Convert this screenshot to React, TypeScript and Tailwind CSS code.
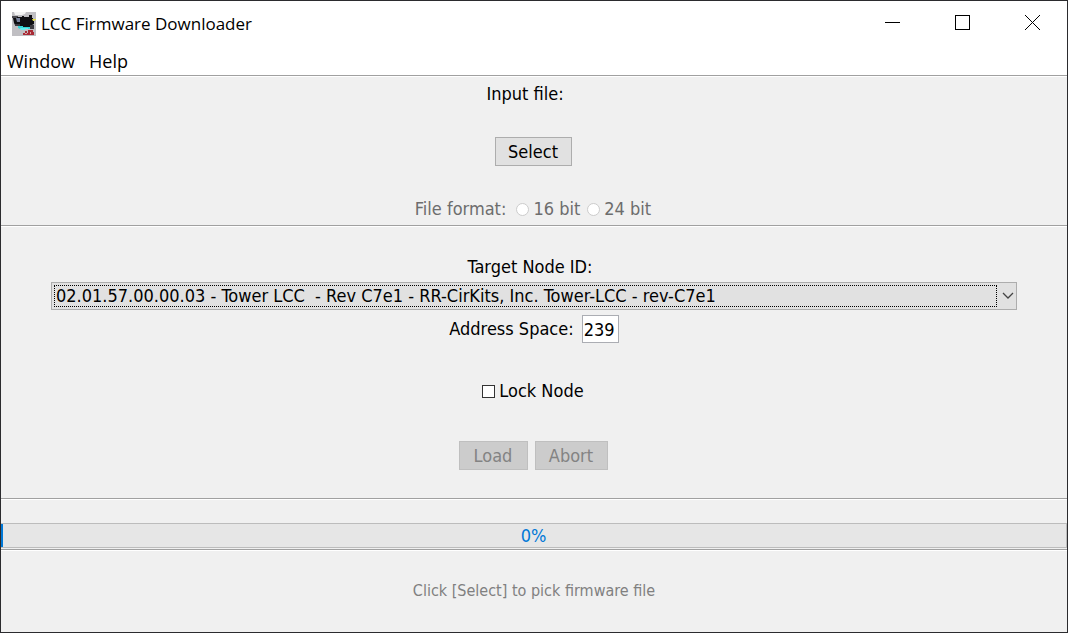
import React, { useState } from 'react';

const NODES = ['02.01.57.00.00.03 - Tower LCC \u00a0- Rev C7e1 - RR-CirKits, Inc. Tower-LCC - rev-C7e1'];

const Separator: React.FC = () => <div className="h-[2px] shrink-0 border-t border-[#a0a0a0] bg-white" />;

const AppIcon: React.FC = () => (
  <svg viewBox="0 0 24 24" className="h-6 w-6" aria-hidden="true">
    <rect width="24" height="24" fill="#c0bfc3" />
    <path d="M2 0h12l-1 2-3 1H3z" fill="#f4f4f4" />
    <path d="M0 4h6v2H0z" fill="#4a494f" />
    <path d="M1 6h4V5h5V4h2v1h5V3h3v3h1v3h1v3l-2 1v2H8l-1-2H3l-1-2z" fill="#0e0e12" />
    <path d="M4 6h4v4H5z" fill="#77809a" />
    <path d="M3 12h5v2H3zM18 13h4v4h-4z" fill="#3b3a40" />
    <path d="M20 7h4v1l-3 1z" fill="#e8e04a" />
    <path d="M6 14h5v1h7v2H8l-2-1z" fill="#35d5d8" />
    <path d="M8 16h8v1h-3v1H9z" fill="#62eeee" />
    <path d="M11 23v-2h2v-2h2v2h1v-3h5v2h1v3z" fill="#a92b35" />
    <path d="M13 21h2v1h-2zM18 20h1v2h-1z" fill="#d9a3a6" />
  </svg>
);

interface PushButtonProps {
  label: string;
  className: string;
  disabled?: boolean;
}

const PushButton: React.FC<PushButtonProps> = ({ label, className, disabled }) => (
  <button
    type="button"
    disabled={disabled}
    className={`h-[29px] border border-[#adadad] bg-[#e1e1e1] disabled:border-[#bfbfbf] disabled:bg-[#cccccc] disabled:text-[#838383] ${className}`}
  >
    {label}
  </button>
);

const TitleBar: React.FC = () => (
  <header className="bg-white font-['Open_Sans',sans-serif] text-[17px]">
    <div className="flex h-[46px] items-center pl-[11px]">
      <AppIcon />
      <h1 className="ml-[5px] flex-1">LCC Firmware Downloader</h1>
      <div className="flex h-[43px] self-start">
        <button type="button" aria-label="Minimize" className="flex w-[70px] items-center justify-center">
          <svg width="15" height="15" shapeRendering="crispEdges"><path d="M0 7.5h15" stroke="#000" /></svg>
        </button>
        <button type="button" aria-label="Maximize" className="flex w-[70px] items-center justify-center">
          <svg width="15" height="15" shapeRendering="crispEdges"><path d="M.5.5h14v14H.5z" fill="none" stroke="#000" /></svg>
        </button>
        <button type="button" aria-label="Close" className="flex w-[70px] items-center justify-center">
          <svg width="15" height="15"><path d="M0 0l15 15M15 0L0 15" stroke="#000" /></svg>
        </button>
      </div>
    </div>
    <nav className="flex h-7 items-center gap-[14px] pl-[6px] text-lg">
      <button type="button">Window</button>
      <button type="button">Help</button>
    </nav>
  </header>
);

export default function App() {
  const [node, setNode] = useState(NODES[0]);
  const [space, setSpace] = useState('239');
  const [lock, setLock] = useState(false);
  const percent = 0;

  return (
    <div className="flex min-h-screen flex-col border border-[#2b2b2e] bg-[#f0f0f0] font-['DejaVu_Sans_Condensed','DejaVu_Sans',sans-serif] text-lg leading-[26px] text-black">
      <TitleBar />
      <Separator />

      <section className="flex flex-col items-center gap-[30px] pt-1 pr-[2px] pb-[3px]">
        <div className="pr-4">Input file:</div>
        <PushButton label="Select" className="w-[77px]" />
        <fieldset disabled className="flex items-center text-[#6d6d6d]">
          <span className="mr-[10px]">File format:</span>
          {['16 bit', '24 bit'].map((format) => (
            <label key={format} className="mr-[7px] flex items-center gap-1 last:mr-0">
              <input type="radio" name="format" className="h-[13px] w-[13px] appearance-none rounded-full border border-[#cccccc] bg-white" />
              {format}
            </label>
          ))}
        </fieldset>
      </section>
      <Separator />

      <section className="flex flex-col items-center px-[50px] pt-[27px] pb-7">
        <label htmlFor="node" className="mb-[2px] pr-2">Target Node ID:</label>
        <div className="grid h-7 w-full grid-cols-[1fr_17px] border border-[#adadad] bg-[#e1e1e1] p-[2px]">
          <select
            id="node"
            value={node}
            onChange={(e) => setNode(e.target.value)}
            className="w-full min-w-0 appearance-none border border-dotted border-black pl-px leading-[20px] outline-none"
          >
            {NODES.map((n) => (
              <option key={n}>{n}</option>
            ))}
          </select>
          <svg width="17" height="22" aria-hidden="true" className="pointer-events-none">
            <path d="M6 8l5 5 5-5" fill="none" stroke="#444" strokeWidth="1.3" />
          </svg>
        </div>
        <div className="mt-[5px] flex h-7 items-center gap-2">
          <label htmlFor="space">Address Space:</label>
          <input
            id="space"
            value={space}
            onChange={(e) => setSpace(e.target.value)}
            className="h-7 w-[37px] border border-[#abadb3] bg-white pl-px outline-none"
          />
        </div>
        <label className="mt-[35px] flex items-center gap-1 pr-[2px]">
          <input
            type="checkbox"
            checked={lock}
            onChange={(e) => setLock(e.target.checked)}
            className="h-[13px] w-[13px] appearance-none border border-[#333333] bg-white checked:bg-[#0078d7]"
          />
          Lock Node
        </label>
        <div className="mt-[37px] flex gap-[7px] pr-[2px]">
          <PushButton label="Load" className="w-[69px]" disabled />
          <PushButton label="Abort" className="w-[73px]" disabled />
        </div>
      </section>
      <Separator />

      <div
        role="progressbar"
        aria-label="Download progress"
        aria-valuenow={percent}
        className="mt-[23px] mb-px grid h-[25px] border-y border-r border-[#bcbcbc] bg-[#e6e6e6]"
      >
        <div className="col-start-1 row-start-1 min-w-[2px] justify-self-start bg-[#0078d7]" style={{ width: `${percent}%` }} />
        <span className="col-start-1 row-start-1 text-center leading-[23px] text-[#0078d7]">{percent}%</span>
      </div>
      <Separator />

      <footer className="flex flex-1 items-center justify-center pb-[2px] text-base text-[#808080]">
        Click [Select] to pick firmware file
      </footer>
    </div>
  );
}
